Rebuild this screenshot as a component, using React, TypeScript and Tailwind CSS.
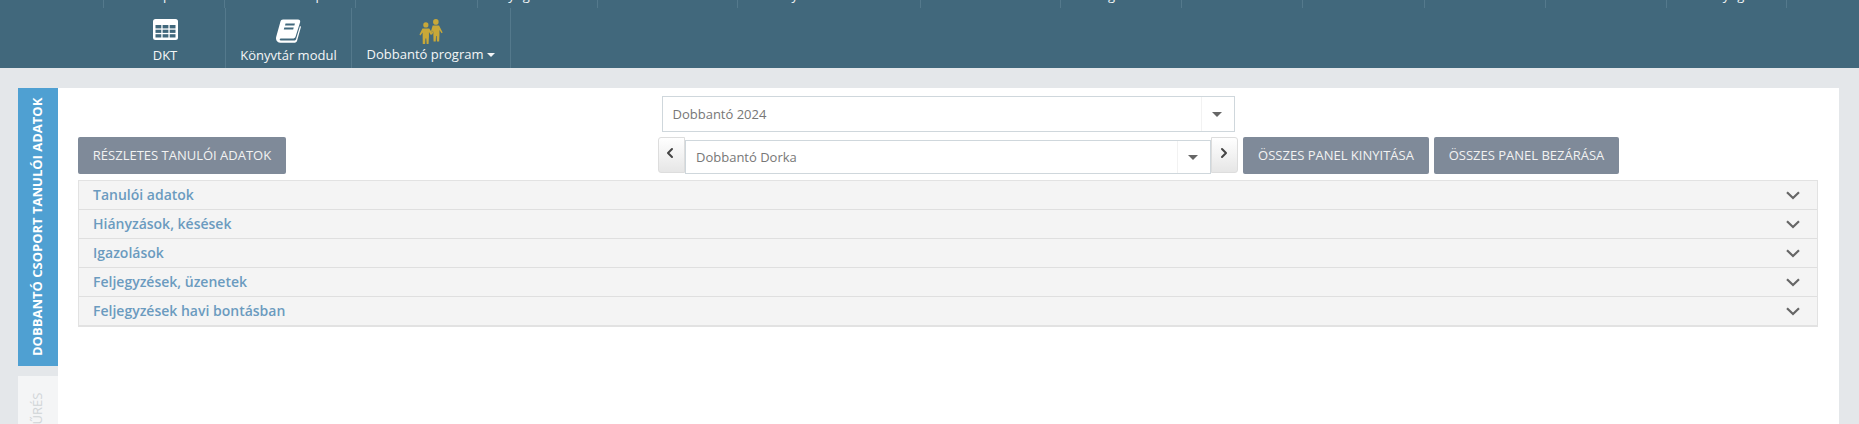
import { ChevronLeft, ChevronRight } from "lucide-react";

const topCells = [
  { label: "Napló", width: "w-[122px]" },
  { label: "Dokumentum portál", width: "w-[131px]" },
  { label: "Tanórák", width: "w-[122px]" },
  { label: "Nyugta listák", width: "w-[120px]" },
  { label: "Mulasztás", width: "w-[140px]" },
  { label: "Nyilvántartások", width: "w-[183px]" },
  { label: "Statisztikák", width: "w-[140px]" },
  { label: "Ingatlan", width: "w-[121px]" },
  { label: "", width: "w-[121px]" },
  { label: "", width: "w-[122px]" },
  { label: "", width: "w-[121px]" },
  { label: "", width: "w-[121px]" },
  { label: "Fő nyugta", width: "w-[120px]" },
];

const panels = [
  "Tanulói adatok",
  "Hiányzások, késések",
  "Igazolások",
  "Feljegyzések, üzenetek",
  "Feljegyzések havi bontásban",
];

const TableIcon = () => (
  <svg width="25" height="21" viewBox="0 0 25 21">
    <rect width="25" height="21" rx="2.5" fill="#ffffff" />
    <g fill="#41687c">
      <rect x="2.5" y="6" width="5.8" height="3.4" />
      <rect x="9.6" y="6" width="5.8" height="3.4" />
      <rect x="16.7" y="6" width="5.8" height="3.4" />
      <rect x="2.5" y="10.7" width="5.8" height="3.2" />
      <rect x="9.6" y="10.7" width="5.8" height="3.2" />
      <rect x="16.7" y="10.7" width="5.8" height="3.2" />
      <rect x="2.5" y="15.2" width="5.8" height="3.3" />
      <rect x="9.6" y="15.2" width="5.8" height="3.3" />
      <rect x="16.7" y="15.2" width="5.8" height="3.3" />
    </g>
  </svg>
);

const BookIcon = () => (
  <svg width="25" height="24" viewBox="0 0 25 24">
    <path
      fill="#ffffff"
      d="M7 .5h15c1.6 0 2.6 1.1 2.1 2.7L19.6 17.5c-.5 1.5-1.4 2-3 2H5.5c-1.2 0-1.8.6-1.8 1 0 .6.6 1 1.8 1H18c1 0 1.8-.5 2.1-1.5l3.9-13 1 .7-4 14.2c-.4 1.2-1.5 1.8-3 1.8H4.5C2 23.7 0 22 0 19.5c0-.6.1-1.2.3-1.9L4.4 2.7C4.8 1.4 5.7.5 7 .5z"
    />
    <path fill="#41687c" d="M9.5 4.6h9.4l-.5 1.8H9zM8.3 8.6h9.4l-.5 1.8H7.8z" />
  </svg>
);

const ChildrenIcon = () => (
  <svg width="24" height="25" viewBox="2.3 1.6 23.7 25" fill="#c8a838">
    <circle cx="9" cy="7.5" r="2.6" />
    <path d="M5.6 11h6.8l2.6 4 2-3.4.9.6-2.6 5-1.6.1-1.6-2.6v4.3l-.4 7.5H9.8L9.4 21h-.8l-.3 5.5H5.9l-.1-7.5V15l-2.2 3-1-.8z" />
    <circle cx="19" cy="4.5" r="2.8" />
    <path d="M15.8 8h6.4l3.6 7.2-1.1.7-2.1-3.2v4.8l-.3 6.5h-2.2l-.3-5.5h-.6l-.3 5.5h-2.2l-.2-6.5v-5l-1.4 2.2-1-.7z" />
  </svg>
);

const PanelChevron = () => (
  <svg width="14" height="9" viewBox="0 0 14 9" fill="none" stroke="#666666" strokeWidth="2.2">
    <path d="M1 1.2l6 5.8 6-5.8" />
  </svg>
);

const Caret = () => (
  <span className="h-0 w-0 border-x-[5px] border-t-[5px] border-x-transparent border-t-[#666666]" />
);

const Select = ({ value, width, height, pad }: { value: string; width: string; height: string; pad: string }) => (
  <div className={`flex items-center border border-[#cfd7dc] bg-white ${width} ${height}`}>
    <span className={`flex-1 pt-[1px] text-[13px] text-[#777777] ${pad}`}>{value}</span>
    <span className="flex h-full w-[33px] items-center justify-center border-l border-[#f2f2f2] pr-[2px]">
      <Caret />
    </span>
  </div>
);

const ActionButton = ({ text, width }: { text: string; width: string }) => (
  <button className={`h-[37px] rounded-[2px] bg-[#7f8a99] text-center text-[13px] text-[#f2f2f2] ${width}`}>
    {text}
  </button>
);

export default function App() {
  return (
    <div className="flex h-[424px] flex-col overflow-hidden bg-[#e4e7ea] font-['Open_Sans',sans-serif]">
      <header className="h-[68px] shrink-0 bg-[#41687c] text-[13px] text-[#f4f6f7]">
        <div className="flex h-[8px] overflow-hidden pl-[103px]">
          {topCells.map((cell, i) => (
            <div
              key={i}
              className={`${cell.width} h-[8px] border-r border-[#54798c] ${i === 0 ? "border-l" : ""} text-center`}
            >
              <div className="-mt-[14px] whitespace-nowrap leading-[18px]">{cell.label}</div>
            </div>
          ))}
        </div>
        <div className="flex h-[60px] pl-[103px]">
          <div className="flex w-[123px] flex-col items-center border-r border-[#54798c] pl-[2px] pt-[11px]">
            <TableIcon />
            <span className="mt-[6px] leading-[18px]">DKT</span>
          </div>
          <div className="flex w-[126px] flex-col items-center border-r border-[#54798c] pt-[11px]">
            <BookIcon />
            <span className="mt-[3px] leading-[18px]">Könyvtár modul</span>
          </div>
          <div className="flex w-[159px] flex-col items-center border-r border-[#54798c] pt-[11px]">
            <ChildrenIcon />
            <span className="mt-[1px] flex items-center gap-[4px] leading-[18px]">
              Dobbantó program
              <span className="mt-[2px] h-0 w-0 border-x-[4px] border-t-[4px] border-x-transparent border-t-[#f4f6f7]" />
            </span>
          </div>
        </div>
      </header>

      <main className="flex flex-1 pl-[18px] pr-[20px] pt-[20px]">
        <aside className="flex w-[40px] shrink-0 flex-col gap-[10px]">
          <div className="flex h-[278px] shrink-0 rotate-180 items-center bg-[#4fa0d2] pt-[10px] text-[13px] font-bold text-white [writing-mode:vertical-rl]">
            DOBBANTÓ CSOPORT TANULÓI ADATOK
          </div>
          <div className="flex h-[100px] shrink-0 rotate-180 items-center justify-end bg-[#f4f5f6] pb-[17px] text-[13px] text-[#d0d4d7] [writing-mode:vertical-rl]">
            SZŰRÉS
          </div>
        </aside>

        <section className="flex-1 bg-white pl-[20px] pr-[21px] pt-[8px]">
          <div className="flex justify-center">
            <Select value="Dobbantó 2024" width="w-[573px]" height="h-[36px]" pad="pl-[10px]" />
          </div>
          <div className="mt-[5px] flex">
            <ActionButton text="RÉSZLETES TANULÓI ADATOK" width="w-[208px]" />
            <div className="ml-[372px] flex items-start">
              <button className="flex h-[36px] w-[27px] justify-center rounded-l-[3px] border border-[#dddddd] bg-gradient-to-b from-white to-[#e6e6e6] pr-[4px] pt-[7px] text-[#444444]">
                <ChevronLeft size={16} strokeWidth={3} />
              </button>
              <div className="mt-[3px]">
                <Select value="Dobbantó Dorka" width="w-[526px]" height="h-[34px]" pad="pl-[10px]" />
              </div>
              <button className="flex h-[36px] w-[27px] justify-center rounded-r-[3px] border border-[#dddddd] bg-gradient-to-b from-white to-[#e6e6e6] pr-[2px] pt-[7px] text-[#444444]">
                <ChevronRight size={16} strokeWidth={3} />
              </button>
            </div>
            <div className="ml-[5px] flex gap-[5px]">
              <ActionButton text="ÖSSZES PANEL KINYITÁSA" width="w-[186px]" />
              <ActionButton text="ÖSSZES PANEL BEZÁRÁSA" width="w-[185px]" />
            </div>
          </div>
          <div className="mt-[6px] border border-b-2 border-[#e2e2e2]">
            {panels.map((title, i) => (
              <div
                key={title}
                className={`flex items-center justify-between bg-[#f4f4f4] pl-[14px] pr-[17px] ${
                  i < panels.length - 1 ? "h-[29px] border-b border-[#dfdfdf]" : "h-[28px]"
                }`}
              >
                <span className="-mt-[2px] text-[14px] font-semibold text-[#6b9bbf]">{title}</span>
                <PanelChevron />
              </div>
            ))}
          </div>
        </section>
      </main>
    </div>
  );
}
